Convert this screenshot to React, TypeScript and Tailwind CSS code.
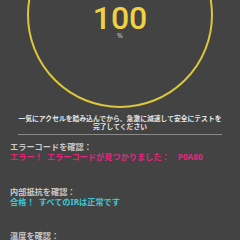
import React from "react";

const checks = [
  { label: "エラーコードを確認：", value: "エラー！\u2002エラーコードが見つかりました：　P0A80", color: "text-[#e6247c]" },
  { label: "内部抵抗を確認：", value: "合格！\u2002すべてのIRは正常です", color: "text-[#3ec6d6]" },
  { label: "温度を確認：", value: "", color: "text-[#3ec6d6]" },
];

const App: React.FC = () => {
  return (
    <div
      className="h-[240px] w-[240px] overflow-hidden bg-[#434343]"
      style={{ fontFamily: '"Noto Sans", "Noto Sans CJK JP", sans-serif' }}
    >
      <div className="flex justify-center">
        <div className="mt-[-78px] flex h-[186px] w-[186px] shrink-0 flex-col items-center rounded-full border-[2.5px] border-[#dcc63c] pt-[79px]">
          <div className="font-['Roboto',sans-serif] text-[32px] leading-[31px] font-medium text-[#efd143]">
            100
          </div>
          <div className="mt-[-2px] text-[7px] leading-[8px] text-[#c8c8c8]">%</div>
        </div>
      </div>

      <div className="mt-[7px] px-2 text-center text-[6.8px] leading-[8px] font-bold text-[#e6e6e6]">
        <p>一気にアクセルを踏み込んでから、急激に減速して安全にテストを</p>
        <p>完了してください</p>
      </div>

      <div className="mx-[18px] mt-[3px] h-px bg-[#8a8a8a]" />

      <div className="mt-[7px] flex flex-col gap-[24.5px] pl-[10px]">
        {checks.map((c) => (
          <div key={c.label} className="text-[8.2px] leading-[10px] font-bold">
            <div className="text-[#cacaca]">{c.label}</div>
            <div className={c.color}>{c.value}</div>
          </div>
        ))}
      </div>
    </div>
  );
};

export default App;
